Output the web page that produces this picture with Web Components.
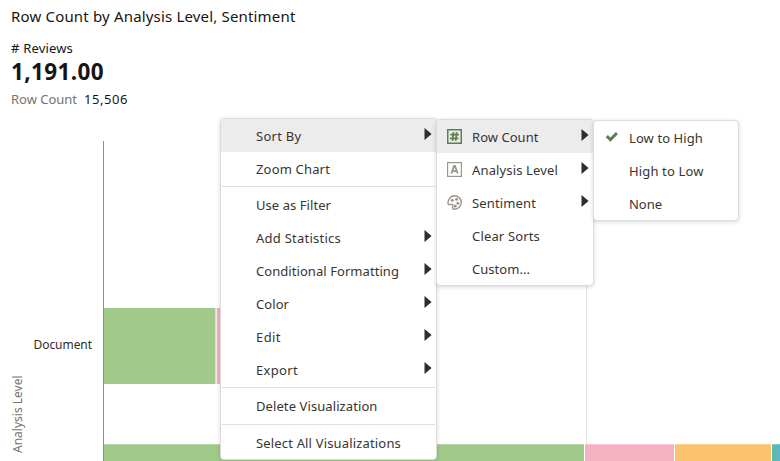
<!DOCTYPE html>
<html lang="en"><head><meta charset="utf-8"><title>Row Count by Analysis Level, Sentiment</title>
<style>
html,body{margin:0;width:780px;height:461px;overflow:hidden;background:#fff}
body{font-family:"Noto Sans","Open Sans",sans-serif;font-size:13px;color:#383431}
</style></head><body>
<viz-app></viz-app>
<script>
const define=(name,html,ready)=>customElements.define(name,class extends HTMLElement{
  constructor(){super();this.attachShadow({mode:"open"}).innerHTML=html;}
  connectedCallback(){if(ready)ready.call(this,this.shadowRoot);}
});

/* Single line of text tracked to a given width. */
define("fit-text",`<style>:host{display:inline-block;white-space:nowrap}span{display:inline-block}</style><span><slot></slot></span>`,function(r){
  const s=r.querySelector("span"),w=+this.getAttribute("w"),n=this.textContent.length;
  if(w){s.style.letterSpacing=((w-s.getBoundingClientRect().width)/n)+"px";}
});

const icons={
number:`<svg width="15" height="15" viewBox="0 0 15 15" fill="none" stroke="#5f7d4f"><rect x=".75" y=".75" width="13.5" height="13.5" stroke-width="1.5"/><path d="M6.500 3.200 5.500 11.800M9.700 3.200 8.700 11.800M3.300 5.700h8.600M2.900 9.300h8.600" stroke-width="1.700"/></svg>`,
attr:`<svg width="15" height="15" viewBox="0 0 15 15" fill="none" stroke="#9b9590"><rect x=".6" y=".6" width="13.800" height="13.800" stroke-width="1.200"/><path d="M4.300 11.500 7.100 4h.8l2.800 7.500M5.400 9.200h4.200" stroke-width="1.800"/></svg>`,
palette:`<svg width="15" height="15" viewBox="0 0 16 16" fill="none" stroke="#9b9590"><path d="M2.500 4C3.800 1.900 5.700 .8 8 .8c4.100 0 7.200 3.100 7.200 7.100 0 4.200-3.200 7.300-7.200 7.300-1.500 0-2.300-1.200-1.900-2.800.5-1.900-.4-3.100-1.900-2.500-1.200.5-2.200.7-2.900-.3C.700 8 1.200 6 2.500 4Z" stroke-width="1.500"/><g fill="#9b9590" stroke="none"><circle cx="5.600" cy="5.600" r="1.600"/><circle cx="10.200" cy="4.600" r="1.600"/><circle cx="11.600" cy="8.700" r="1.600"/><circle cx="8.800" cy="11.600" r="1.600"/></g></svg>`,
check:`<svg width="14" height="12" viewBox="0 0 14 12"><path d="m.7 6.300 2.200-2.300 2.500 2.400L10.900 1 13 2.900 5.500 10.700Z" fill="#5f7d4f"/></svg>`};

define("menu-item",`<style>
:host{display:flex;height:33px;align-items:center;box-sizing:border-box;padding-right:4px}
:host([active]){background:#ececec}
.icon{width:var(--gutter,35px);flex:none;display:flex;padding-left:var(--icon-left,10px);margin-bottom:1px;box-sizing:border-box}
.label{flex:1;line-height:33px;padding-top:1px}
.arrow{display:none;width:8px;height:12px;margin-bottom:3px}
:host([sub]) .arrow{display:block}
</style><span class="icon"></span><span class="label"><slot></slot></span>
<svg class="arrow" viewBox="0 0 8 12"><path d="M.5 0v12L7.600 6Z" fill="#312d2a"/></svg>`,function(r){
  r.querySelector(".icon").innerHTML=icons[this.getAttribute("icon")]||"";
});
define("menu-separator",`<style>:host{display:block;height:3px;padding:1px 1px 0;box-sizing:border-box}:host([tall]){height:4px;padding-top:2px}i{display:block;height:1px;background:#dfdfdd}</style><i></i>`);
define("menu-panel",`<style>:host{display:block;position:absolute;box-sizing:border-box;background:#fff;border:1px solid #dcdcda;border-radius:4px;box-shadow:0 1px 4px rgba(0,0,0,.16);overflow:hidden}</style><slot></slot>`);

define("metric-summary",`<style>
:host{display:block;padding-left:11px;color:#161513}
div{white-space:nowrap}
.title{font-size:15px;line-height:20px;padding-top:6px}
.name{line-height:18px;padding-top:13px}
.value{font-size:22.500px;line-height:28px;font-weight:700;height:29px;padding-top:1px}
.sub{line-height:18px;padding-top:3px}
.muted{color:#77736f;margin-right:7px}
</style>
<div class="title"><fit-text w="284.500">Row Count by Analysis Level, Sentiment</fit-text></div>
<div class="name"><fit-text w="62">#&nbsp;Reviews</fit-text></div>
<div class="value"><fit-text w="93">1,191.00</fit-text></div>
<div class="sub"><fit-text class="muted" w="66">Row Count</fit-text><fit-text w="44">15,506</fit-text></div>`);

define("bar-chart",`<style>
:host{display:grid;grid-template-columns:29px 74px 1fr;height:320px;font-size:12px}
.axis{writing-mode:vertical-rl;transform:rotate(180deg);color:#77736f;line-height:16px;width:16px;padding-top:8px;justify-self:start;margin-left:10px}
.cat{padding-top:194px;text-align:right;padding-right:11px;line-height:20px;color:#312d2a}
.plot{border-left:1px solid #8e8e8e;overflow:hidden;display:flex;flex-direction:column;background:linear-gradient(#e3e3e5,#e3e3e5) 482px 0/1px 100% no-repeat}
.bar{display:flex}
.a{height:76px;margin-top:167px}.b{height:17px;margin-top:60px}
.b i{box-shadow:inset 0 1px rgba(255,255,255,.25)}
i{flex:none;box-sizing:border-box;border-right:1px solid #fff}
.g{background:#a1c98a}.p{background:#f4b1c2}.o{background:#fbc36b}.t{background:#5fb8b3}
</style>
<span class="axis"><fit-text>Analysis Level</fit-text></span>
<div class="cat"><fit-text w="58.500">Document</fit-text></div>
<div class="plot"><div class="bar a"><i class="g" style="width:112px;border-color:#d3e5c9"></i><i class="p" style="width:60px;border-left:1px solid #f5e4e8"></i></div>
<div class="bar b"><i class="g" style="width:481px"></i><i class="p" style="width:90px"></i><i class="o" style="width:97px"></i><i class="t" style="width:20px"></i></div></div>`);

define("viz-app",`<style>
:host{display:block;position:relative;width:780px;height:461px;overflow:hidden}
metric-summary{height:141px;box-sizing:border-box}
.m1{left:220px;top:118px;width:217px;height:342px}
.m2{left:436px;top:119px;width:158px;height:167px}
.m3{left:593px;top:120px;width:146px;height:101px;--icon-left:11px}
</style>
<metric-summary></metric-summary>
<bar-chart></bar-chart>
<menu-panel class="m1">
<menu-item active sub><fit-text w="45.500">Sort By</fit-text></menu-item>
<menu-item><fit-text w="74">Zoom Chart</fit-text></menu-item><menu-separator></menu-separator>
<menu-item><fit-text w="75">Use as Filter</fit-text></menu-item>
<menu-item sub><fit-text w="85">Add Statistics</fit-text></menu-item>
<menu-item sub><fit-text w="143">Conditional Formatting</fit-text></menu-item>
<menu-item sub><fit-text w="33">Color</fit-text></menu-item>
<menu-item sub><fit-text w="25">Edit</fit-text></menu-item>
<menu-item sub><fit-text w="42">Export</fit-text></menu-item><menu-separator></menu-separator>
<menu-item><fit-text w="121.500">Delete Visualization</fit-text></menu-item><menu-separator tall></menu-separator>
<menu-item><fit-text w="145">Select All Visualizations</fit-text></menu-item>
</menu-panel>
<menu-panel class="m2">
<menu-item active sub icon="number"><fit-text w="66.500">Row Count</fit-text></menu-item>
<menu-item sub icon="attr"><fit-text w="86">Analysis Level</fit-text></menu-item>
<menu-item sub icon="palette"><fit-text w="64">Sentiment</fit-text></menu-item>
<menu-item><fit-text w="68">Clear Sorts</fit-text></menu-item>
<menu-item><fit-text w="58">Custom...</fit-text></menu-item>
</menu-panel>
<menu-panel class="m3">
<menu-item icon="check"><fit-text w="74">Low to High</fit-text></menu-item>
<menu-item><fit-text w="74.500">High to Low</fit-text></menu-item>
<menu-item><fit-text w="33">None</fit-text></menu-item>
</menu-panel>`);
</script></body></html>
